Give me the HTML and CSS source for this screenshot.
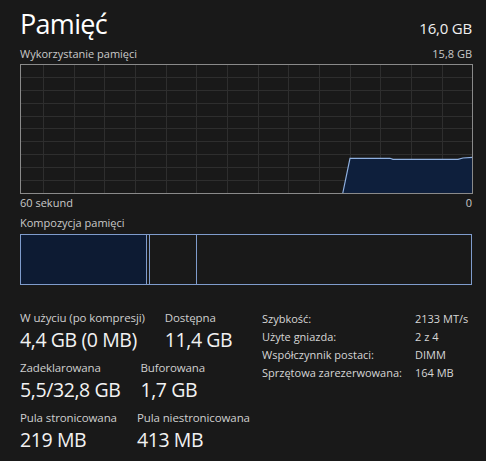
FILE: index.html
```html
<!DOCTYPE html>
<html lang="pl">
<head>
<meta charset="utf-8">
<link rel="stylesheet" href="styles.css">
</head>
<body>
<div class="page">
  <div class="head">
    <h1 class="title">Pamięć</h1>
    <div class="total">16,0 GB</div>
  </div>
  <div class="sub">
    <span>Wykorzystanie pamięci</span>
    <span>15,8 GB</span>
  </div>
  <svg class="chart" width="453" height="130" viewBox="0 0 453 130">
    <g class="grid">
      <line x1="23.5" y1="0" x2="23.5" y2="130"/>
      <line x1="54.5" y1="0" x2="54.5" y2="130"/>
      <line x1="84.5" y1="0" x2="84.5" y2="130"/>
      <line x1="115.5" y1="0" x2="115.5" y2="130"/>
      <line x1="146.5" y1="0" x2="146.5" y2="130"/>
      <line x1="176.5" y1="0" x2="176.5" y2="130"/>
      <line x1="207.5" y1="0" x2="207.5" y2="130"/>
      <line x1="238.5" y1="0" x2="238.5" y2="130"/>
      <line x1="268.5" y1="0" x2="268.5" y2="130"/>
      <line x1="299.5" y1="0" x2="299.5" y2="130"/>
      <line x1="330.5" y1="0" x2="330.5" y2="130"/>
      <line x1="360.5" y1="0" x2="360.5" y2="130"/>
      <line x1="391.5" y1="0" x2="391.5" y2="130"/>
      <line x1="422.5" y1="0" x2="422.5" y2="130"/>
      <line x1="0" y1="13.5" x2="453" y2="13.5"/>
      <line x1="0" y1="26.5" x2="453" y2="26.5"/>
      <line x1="0" y1="39.5" x2="453" y2="39.5"/>
      <line x1="0" y1="52.5" x2="453" y2="52.5"/>
      <line x1="0" y1="64.5" x2="453" y2="64.5"/>
      <line x1="0" y1="77.5" x2="453" y2="77.5"/>
      <line x1="0" y1="90.5" x2="453" y2="90.5"/>
      <line x1="0" y1="103.5" x2="453" y2="103.5"/>
      <line x1="0" y1="116.5" x2="453" y2="116.5"/>
    </g>
    <polygon class="area" points="322.7,129.5 330,94.3 370,94.3 373,95.3 438,95.3 443,94 452.5,93.3 452.5,129.5"/>
    <polyline class="edge" points="322.7,129.5 330,94.3 370,94.3 373,95.3 438,95.3 443,94 452.5,93.3"/>
    <rect class="frame" x="0.5" y="0.5" width="452" height="129"/>
  </svg>
  <div class="axis">
    <span>60 sekund</span>
    <span>0</span>
  </div>
  <div class="label">Kompozycja pamięci</div>
  <div class="comp">
    <div class="seg seg-used"></div>
    <div class="seg seg-mod"></div>
    <div class="seg seg-standby"></div>
    <div class="seg seg-free"></div>
  </div>
  <div class="stats">
    <div class="left">
      <div class="row">
        <div class="stat"><div class="k">W użyciu (po kompresji)</div><div class="v">4,4 GB (0 MB)</div></div>
        <div class="stat"><div class="k">Dostępna</div><div class="v">11,4 GB</div></div>
      </div>
      <div class="row">
        <div class="stat"><div class="k">Zadeklarowana</div><div class="v">5,5/32,8 GB</div></div>
        <div class="stat"><div class="k">Buforowana</div><div class="v">1,7 GB</div></div>
      </div>
      <div class="row">
        <div class="stat"><div class="k">Pula stronicowana</div><div class="v">219 MB</div></div>
        <div class="stat"><div class="k">Pula niestronicowana</div><div class="v">413 MB</div></div>
      </div>
    </div>
    <div class="right">
      <span class="rk">Szybkość:</span><span class="rv">2133 MT/s</span>
      <span class="rk">Użyte gniazda:</span><span class="rv">2 z 4</span>
      <span class="rk">Współczynnik postaci:</span><span class="rv">DIMM</span>
      <span class="rk">Sprzętowa zarezerwowana:</span><span class="rv">164 MB</span>
    </div>
  </div>
</div>
</body>
</html>
```

FILE: styles.css
```css
html, body {
  margin: 0;
  padding: 0;
  background: #191919;
}
body {
  font-family: "Open Sans", "Noto Sans", sans-serif;
  color: #e6e6e6;
  width: 486px;
  height: 461px;
  overflow: hidden;
}
.page {
  padding: 4px 14px 0 20px;
}
.head {
  display: flex;
  justify-content: space-between;
  align-items: baseline;
  height: 40px;
}
.title {
  margin: 0;
  font-weight: 400;
  font-size: 27px;
  letter-spacing: -0.7px;
  line-height: 40px;
  color: #ffffff;
}
.total {
  font-size: 15px;
  letter-spacing: -0.2px;
  color: #f0f0f0;
}
.sub {
  display: flex;
  justify-content: space-between;
  font-size: 11px;
  line-height: 16px;
  color: #c9c9c9;
  margin-top: 2px;
}
.chart {
  display: block;
  margin-top: 2px;
}
.grid line {
  stroke: #2e2e2e;
  stroke-width: 1;
}
.frame {
  fill: none;
  stroke: #8a8a8a;
  stroke-width: 1;
}
.area {
  fill: #0e1f3c;
}
.edge {
  fill: none;
  stroke: #8fb0e0;
  stroke-width: 1.2;
}
.axis {
  display: flex;
  justify-content: space-between;
  font-size: 11px;
  line-height: 16px;
  color: #c9c9c9;
  margin-top: 1px;
}
.label {
  font-size: 11px;
  line-height: 16px;
  color: #c9c9c9;
  margin-top: 4px;
}
.comp {
  display: flex;
  height: 49px;
  border: 1px solid #7f9ccc;
  margin-top: 3px;
}
.seg {
  height: 100%;
}
.seg-used {
  width: 125px;
  background: #0d1b33;
  border-right: 1px solid #7f9ccc;
}
.seg-mod {
  width: 2px;
  border-right: 1px solid #7f9ccc;
}
.seg-standby {
  width: 46px;
  border-right: 1px solid #7f9ccc;
}
.seg-free {
  flex: 1;
}
.stats {
  display: grid;
  grid-template-columns: 242px 1fr;
  margin-top: 25px;
}
.left {
  display: flex;
  flex-direction: column;
  gap: 6px;
}
.row {
  display: flex;
  gap: 20px;
  white-space: nowrap;
}
.k {
  font-size: 11.5px;
  line-height: 16px;
  letter-spacing: -0.1px;
  color: #cfcfcf;
}
.v {
  font-size: 19.5px;
  line-height: 28px;
  letter-spacing: -0.4px;
  color: #f2f2f2;
}
.right {
  display: grid;
  grid-template-columns: 153px auto;
  font-size: 11px;
  line-height: 18px;
  color: #d6d6d6;
  align-content: start;
  white-space: nowrap;
}
```
